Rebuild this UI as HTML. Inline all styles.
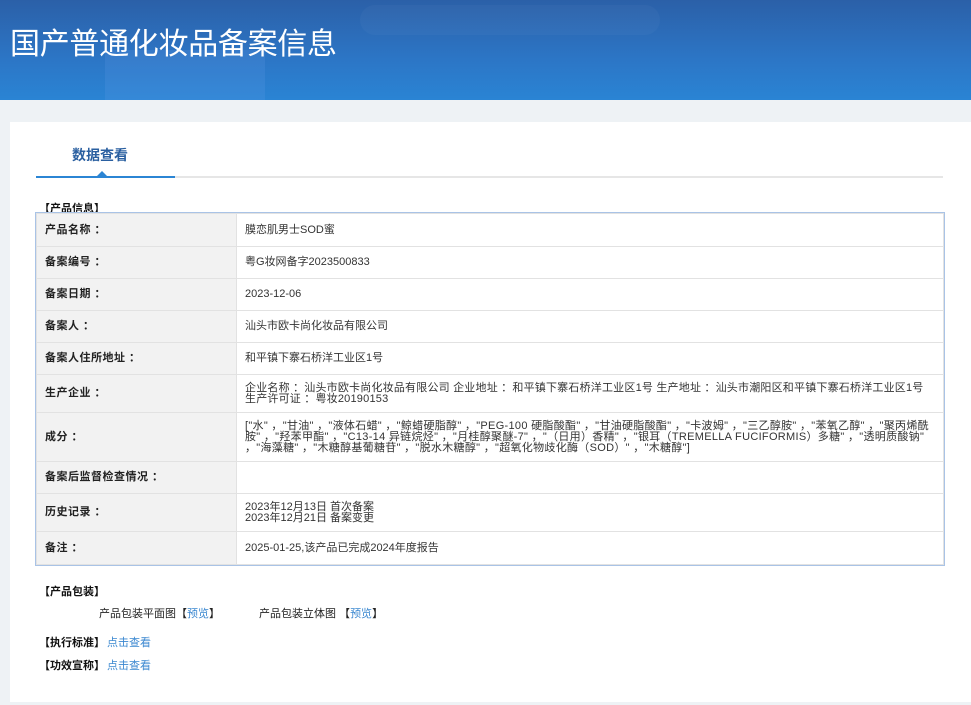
<!DOCTYPE html>
<html><head><meta charset="utf-8"><style>
*{margin:0;padding:0;box-sizing:border-box}
body{width:971px;height:705px;overflow:hidden;background:#eef2f5;font-family:"Liberation Sans","Noto Sans CJK SC",sans-serif;font-size:11px;color:#333;position:relative}
.hdr{position:absolute;left:0;top:0;width:971px;height:100px;background:linear-gradient(180deg,#2b60a8 0%,#2c76c6 60%,#2a84d4 100%);overflow:hidden}
.hdr .b1{position:absolute;left:105px;top:50px;width:160px;height:55px;background:rgba(120,170,240,.15)}
.hdr .b2{position:absolute;left:360px;top:5px;width:300px;height:30px;border-radius:15px;background:rgba(255,255,255,.03)}
.hdr h1{position:absolute;left:10px;top:19px;font-size:30px;font-weight:normal;color:#fff;font-family:"Noto Sans CJK SC",sans-serif;letter-spacing:-0.3px}
.panel{position:absolute;left:10px;top:122px;width:961px;height:580px;background:#fff}
.tab{position:absolute;left:72px;top:145px;font-size:14px;color:#2a5fa0;font-weight:bold}
.line{position:absolute;left:36px;top:176px;width:907px;height:2px;background:#e6e6e6}
.line i{position:absolute;left:0;top:0;width:139px;height:2px;background:#2b85d4}
.tri{position:absolute;left:97px;top:171px;width:0;height:0;border-left:5px solid transparent;border-right:5px solid transparent;border-bottom:5px solid #2b85d4}
.sec{position:absolute;font-weight:bold;color:#111;font-size:11px}
table{position:absolute;left:36px;top:213px;width:908px;border-collapse:collapse;outline:1px solid #a9c3e6}
td{border:1px solid #e2e2e2;padding:0 8px;font-size:11px;line-height:11px;vertical-align:middle}
td.l{width:200px;background:#f2f2f2;font-weight:bold;color:#222;letter-spacing:0.5px}
a{color:#3a87d0;text-decoration:none}
.t{position:absolute;font-size:11px;color:#222}
</style></head><body>
<div class="hdr"><div class="b1"></div><div class="b2"></div><h1>国产普通化妆品备案信息</h1></div>
<div class="panel"></div>
<div class="tab">数据查看</div>
<div class="line"><i></i></div>
<div class="tri"></div>
<div class="sec" style="left:39px;top:200px">【产品信息】</div>
<table>
<tr style="height:33px"><td class="l">产品名称 ：</td><td>膜恋肌男士SOD蜜</td></tr>
<tr style="height:32px"><td class="l">备案编号 ：</td><td>粤G妆网备字2023500833</td></tr>
<tr style="height:32px"><td class="l">备案日期 ：</td><td>2023-12-06</td></tr>
<tr style="height:32px"><td class="l">备案人 ：</td><td>汕头市欧卡尚化妆品有限公司</td></tr>
<tr style="height:32px"><td class="l">备案人住所地址 ：</td><td>和平镇下寨石桥洋工业区1号</td></tr>
<tr style="height:38px"><td class="l">生产企业 ：</td><td style="letter-spacing:0.2px">企业名称 ：汕头市欧卡尚化妆品有限公司 企业地址 ：和平镇下寨石桥洋工业区1号 生产地址 ：汕头市潮阳区和平镇下寨石桥洋工业区1号 生产许可证 ：粤妆20190153</td></tr>
<tr style="height:49px"><td class="l">成分 ：</td><td style="letter-spacing:0.3px">["水" ，"甘油" ，"液体石蜡" ，"鲸蜡硬脂醇" ，"PEG-100 硬脂酸酯" ，"甘油硬脂酸酯" ，"卡波姆" ，"三乙醇胺" ，"苯氧乙醇" ，"聚丙烯酰胺" ，"羟苯甲酯" ，"C13-14 异链烷烃" ，"月桂醇聚醚-7" ，"（日用）香精" ，"银耳（TREMELLA FUCIFORMIS）多糖" ，"透明质酸钠" ，"海藻糖" ，"木糖醇基葡糖苷" ，"脱水木糖醇" ，"超氧化物歧化酶（SOD）" ，"木糖醇"]</td></tr>
<tr style="height:32px"><td class="l">备案后监督检查情况 ：</td><td></td></tr>
<tr style="height:38px"><td class="l">历史记录 ：</td><td>2023年12月13日 首次备案<br>2023年12月21日 备案变更</td></tr>
<tr style="height:33px"><td class="l">备注 ：</td><td>2025-01-25,该产品已完成2024年度报告</td></tr>
</table>
<div class="sec" style="left:39px;top:583px">【产品包装】</div>
<div class="t" style="left:99px;top:605px">产品包装平面图【<a>预览</a>】</div>
<div class="t" style="left:259px;top:605px">产品包装立体图 【<a>预览</a>】</div>
<div class="sec" style="left:39px;top:634px">【执行标准】</div><div class="t" style="left:107px;top:634px"><a>点击查看</a></div>
<div class="sec" style="left:39px;top:657px">【功效宣称】</div><div class="t" style="left:107px;top:657px"><a>点击查看</a></div>
</body></html>
